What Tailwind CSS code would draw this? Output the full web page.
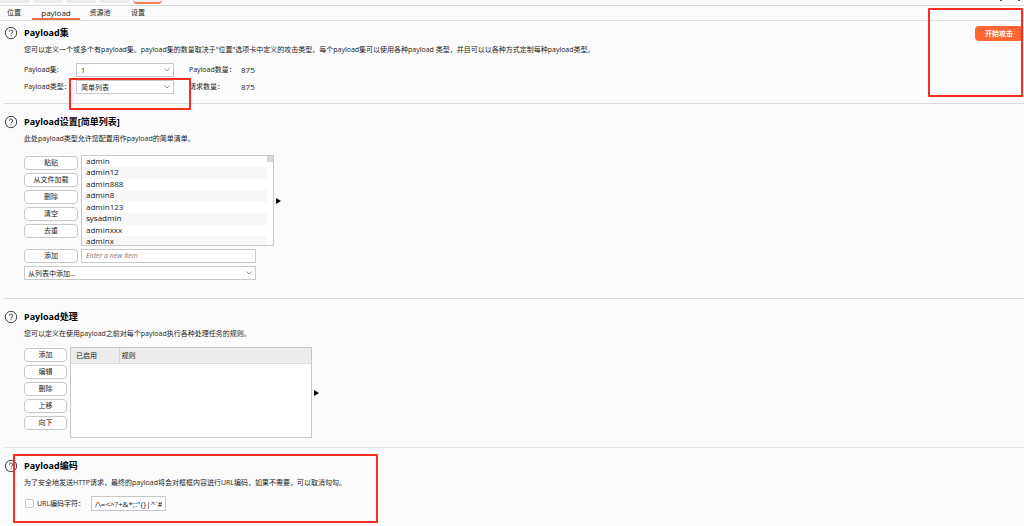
<!DOCTYPE html>
<html lang="zh-CN">
<head>
    <meta charset="UTF-8">
    <meta name="viewport" content="width=device-width, initial-scale=1.0">
    <title>Payload</title>
    <script src="https://cdn.jsdelivr.net/npm/@tailwindcss/browser@4"></script>
</head>
<body class="bg-[#fbfbfb] text-[#222] text-[7px] leading-[14px] font-['Open_Sans','Noto_Sans_CJK_SC',sans-serif]">

    <!-- bottom edge of the main tool tabs -->
    <div class="flex justify-between h-[6px] border-b border-[#d9d9d9] overflow-hidden">
        <div class="flex gap-[3px]">
            <span class="w-[30px] h-[3px] bg-[#ececec] rounded-b-sm"></span>
            <span class="w-[30px] h-[3px] bg-[#ececec] rounded-b-sm"></span>
            <span class="w-[30px] h-[3px] bg-[#ececec] rounded-b-sm"></span>
            <span class="w-[31px] h-[3px] bg-[#ececec] rounded-b-sm"></span>
            <span class="w-[29px] h-1 bg-[#ececec] border-b-2 border-[#f47f5c] rounded-b-sm"></span>
        </div>
        <div class="flex gap-4 pr-1">
            <span class="w-[2px] h-px bg-[#555]"></span>
            <span class="w-[2px] h-px bg-[#555]"></span>
        </div>
    </div>

    <nav class="flex h-[15px] border-b border-[#e0e0e0]">
        <a href="#" class="w-8 pl-[7px]">位置</a>
        <a href="#" class="w-12 text-center text-[8px] border-b-2 border-[#f4704a]">payload</a>
        <a href="#" class="w-10 text-center">资源池</a>
        <a href="#" class="w-9 text-center">设置</a>
    </nav>

    <main class="pl-1">
        <section class="relative flex gap-[6px] pt-[5px] pb-[9px] border-b border-[#dcdcdc]">
            <svg class="w-[14px] h-[14px] shrink-0" viewBox="0 0 14 14" fill="none" stroke="#444" stroke-width="1"><circle cx="7" cy="7" r="5.7"/><path d="M5.3 5.7a1.7 1.6 0 1 1 2.6 1.3c-.6.4-.9.7-.9 1.3M7 9.3v1"/></svg>
            <div class="grow">
                <h2 class="text-[9px] font-bold text-black">Payload集</h2>
                <p class="mt-[3px]">您可以定义一个或多个有payload集。payload集的数量取决于"位置"选项卡中定义的攻击类型。每个payload集可以使用各种payload 类型，并目可以以各种方式定制每种payload类型。</p>
                <div class="grid grid-cols-[52px_98px_52px_auto] gap-y-[3px] mt-[6px]">
                    <label for="set">Payload集:</label>
                    <div class="relative">
                        <select id="set" class="block w-full h-[14px] px-1 border border-[#c8c8c8] bg-white appearance-none"><option>1</option></select>
                        <svg class="absolute right-1 top-1 w-[6px] h-[6px]" viewBox="0 0 6 6" fill="none" stroke="#777" stroke-width=".8"><path d="M.5 1.5 3 4l2.5-2.5"/></svg>
                    </div>
                    <span class="pl-[15px] whitespace-nowrap">Payload数量：</span>
                    <span class="pl-[15px] text-[8px]">875</span>
                    <label for="type" class="whitespace-nowrap">Payload类型：</label>
                    <div class="relative">
                        <select id="type" class="block w-full h-[14px] px-1 border border-[#c8c8c8] bg-white appearance-none"><option>简单列表</option></select>
                        <svg class="absolute right-1 top-1 w-[6px] h-[6px]" viewBox="0 0 6 6" fill="none" stroke="#777" stroke-width=".8"><path d="M.5 1.5 3 4l2.5-2.5"/></svg>
                    </div>
                    <span class="pl-[15px] whitespace-nowrap">请求数量：</span>
                    <span class="pl-[15px] text-[8px]">875</span>
                </div>
            </div>
            <button type="button" class="w-12 h-[15px] mr-[1px] rounded-sm bg-[#ff6633] text-white font-bold">开始攻击</button>
            <div class="absolute left-[65px] top-[57px] w-[122px] h-8 border-2 border-[#fb2c22] rounded-[1px]"></div>
            <div class="absolute right-[1px] -top-[13px] w-[95px] h-[89px] border-2 border-[#fb2c22] rounded-[1px]"></div>
        </section>

        <section class="flex gap-[6px] pt-[11px] pb-[18px] border-b border-[#dcdcdc]">
            <svg class="w-[14px] h-[14px] shrink-0" viewBox="0 0 14 14" fill="none" stroke="#444" stroke-width="1"><circle cx="7" cy="7" r="5.7"/><path d="M5.3 5.7a1.7 1.6 0 1 1 2.6 1.3c-.6.4-.9.7-.9 1.3M7 9.3v1"/></svg>
            <div>
                <h2 class="text-[9px] font-bold text-black">Payload设置[简单列表]</h2>
                <p class="mt-[3px]">此处payload类型允许您配置用作payload的简单清单。</p>
                <div class="flex gap-[3px] mt-[9px]">
                    <div class="flex flex-col gap-[3px] w-[54px] pt-px">
                        <button type="button" class="h-[14px] leading-3 border border-[#c8c8c8] rounded-sm bg-white">粘贴</button>
                        <button type="button" class="h-[14px] leading-3 border border-[#c8c8c8] rounded-sm bg-white">从文件加载</button>
                        <button type="button" class="h-[14px] leading-3 border border-[#c8c8c8] rounded-sm bg-white">删除</button>
                        <button type="button" class="h-[14px] leading-3 border border-[#c8c8c8] rounded-sm bg-white">清空</button>
                        <button type="button" class="h-[14px] leading-3 border border-[#c8c8c8] rounded-sm bg-white">去重</button>
                    </div>
                    <div class="flex w-[193px] h-[91px] border border-[#c8c8c8] bg-white overflow-hidden">
                        <ul class="grow text-[8px] leading-[10px] *:pl-1 *:odd:h-[11px] *:even:h-3 *:even:bg-[#f7f7f7]">
                            <li>admin</li>
                            <li>admin12</li>
                            <li>admin888</li>
                            <li>admin8</li>
                            <li>admin123</li>
                            <li>sysadmin</li>
                            <li>adminxxx</li>
                            <li>adminx</li>
                        </ul>
                        <span class="w-[6px] h-[6px] bg-[#d8d8d8]"></span>
                    </div>
                    <svg class="w-[6px] h-[6px] -ml-[2px] self-center" viewBox="0 0 6 6"><path d="M1 0v6l5-3z"/></svg>
                </div>
                <div class="flex gap-[3px] mt-[3px]">
                    <button type="button" class="w-[54px] h-[14px] leading-3 border border-[#c8c8c8] rounded-sm bg-white">添加</button>
                    <input type="text" aria-label="new item" placeholder="Enter a new item" class="w-[175px] h-[14px] px-1 border border-[#c8c8c8] bg-white italic placeholder:text-[#777]">
                </div>
                <div class="relative w-[232px] mt-[3px]">
                    <select aria-label="从列表中添加" class="block w-full h-[14px] px-[3px] border border-[#c8c8c8] bg-white appearance-none"><option>从列表中添加...</option></select>
                    <svg class="absolute right-1 top-1 w-[6px] h-[6px]" viewBox="0 0 6 6" fill="none" stroke="#777" stroke-width=".8"><path d="M.5 1.5 3 4l2.5-2.5"/></svg>
                </div>
            </div>
        </section>

        <section class="flex gap-[6px] pt-[11px] pb-[9px] border-b border-[#e8e8e8]">
            <svg class="w-[14px] h-[14px] shrink-0" viewBox="0 0 14 14" fill="none" stroke="#444" stroke-width="1"><circle cx="7" cy="7" r="5.7"/><path d="M5.3 5.7a1.7 1.6 0 1 1 2.6 1.3c-.6.4-.9.7-.9 1.3M7 9.3v1"/></svg>
            <div>
                <h2 class="text-[9px] font-bold text-black">Payload处理</h2>
                <p class="mt-[3px]">您可以定义在使用payload之前对每个payload执行各种处理任务的规则。</p>
                <div class="flex gap-[3px] mt-[6px]">
                    <div class="flex flex-col gap-[3px] w-[43px] pt-px">
                        <button type="button" class="h-[14px] leading-3 border border-[#c8c8c8] rounded-sm bg-white">添加</button>
                        <button type="button" class="h-[14px] leading-3 border border-[#c8c8c8] rounded-sm bg-white">编辑</button>
                        <button type="button" class="h-[14px] leading-3 border border-[#c8c8c8] rounded-sm bg-white">删除</button>
                        <button type="button" class="h-[14px] leading-3 border border-[#c8c8c8] rounded-sm bg-white">上移</button>
                        <button type="button" class="h-[14px] leading-3 border border-[#c8c8c8] rounded-sm bg-white">向下</button>
                    </div>
                    <div class="w-[242px] h-[91px] border border-[#c8c8c8] bg-white">
                        <table class="w-full bg-[#ececec] border-b border-[#dcdcdc] text-left">
                            <thead>
                                <tr>
                                    <th class="w-12 pl-[5px] pt-px font-normal border-r border-[#d4d4d4]">已启用</th>
                                    <th class="pl-[2px] pt-px font-normal">规则</th>
                                </tr>
                            </thead>
                        </table>
                    </div>
                    <svg class="w-[6px] h-[6px] -ml-[2px] self-center" viewBox="0 0 6 6"><path d="M1 0v6l5-3z"/></svg>
                </div>
            </div>
        </section>

        <section class="relative flex gap-[6px] pt-[11px] pb-4">
            <svg class="w-[14px] h-[14px] shrink-0" viewBox="0 0 14 14" fill="none" stroke="#444" stroke-width="1"><circle cx="7" cy="7" r="5.7"/><path d="M5.3 5.7a1.7 1.6 0 1 1 2.6 1.3c-.6.4-.9.7-.9 1.3M7 9.3v1"/></svg>
            <div>
                <h2 class="text-[9px] font-bold text-black">Payload编码</h2>
                <p class="mt-[3px]">为了安全地发送HTTP请求，最终的payload将会对框框内容进行URL编码，如果不需要，可以取消勾勾。</p>
                <div class="flex items-center mt-[6px]">
                    <input type="checkbox" id="encode" class="appearance-none w-[9px] h-[9px] ml-px mr-[3px] border border-[#c8c8c8] rounded-xs bg-white">
                    <label for="encode" class="w-[54px]">URL编码字符：</label>
                    <input type="text" aria-label="URL编码字符" value="/\=&lt;&gt;?+&amp;*;:&quot;{}|^`#" class="w-[75px] h-[15px] px-[3px] border border-[#c8c8c8] bg-white text-[8px]">
                </div>
            </div>
            <div class="absolute left-[9px] top-[6px] w-[365px] h-[69px] border-2 border-[#fb2c22] rounded-[1px]"></div>
        </section>
    </main>
</body>
</html>
